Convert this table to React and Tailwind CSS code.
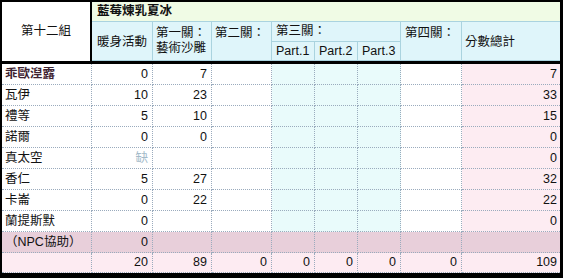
import React from "react";

const font = { fontFamily: "'Liberation Sans','Noto Sans CJK TC',sans-serif" };

const rows = [
  { name: "乖歐湼露", bold: true, v: ["0", "7", "", "", "", "", "", "7"] },
  { name: "瓦伊", v: ["10", "23", "", "", "", "", "", "33"] },
  { name: "禮等", v: ["5", "10", "", "", "", "", "", "15"] },
  { name: "諾爾", v: ["0", "0", "", "", "", "", "", "0"] },
  { name: "真太空", v: ["缺", "", "", "", "", "", "", "0"] },
  { name: "香仁", v: ["5", "27", "", "", "", "", "", "32"] },
  { name: "卡崙", v: ["0", "22", "", "", "", "", "", "22"] },
  { name: "蘭提斯默", v: ["0", "", "", "", "", "", "", "0"] },
  { name: "（NPC協助）", npc: true, v: ["0", "", "", "", "", "", "", ""] },
  { name: "", total: true, v: ["20", "89", "0", "0", "0", "0", "0", "109"] },
];

const colBg = [
  "bg-white",
  "bg-white",
  "bg-white",
  "bg-[#e9fbfb]",
  "bg-[#e9fbfb]",
  "bg-[#e9fbfb]",
  "bg-white",
  "bg-[#fdecf2]",
];

const hb = "border-[#aad3df]";

export default function App() {
  return (
    <div
      className="w-[563px] h-[278px] bg-black pl-[2px] pt-[2px] text-[12.5px] text-[#111]"
      style={font}
    >
      <div className="w-[558px] grid grid-cols-[90px_61px_59px_60px_43px_43px_43px_61px_98px] grid-rows-[20px_20px_19px_3px_repeat(9,21px)_20px]">
        {/* header */}
        <div className="row-span-3 bg-white border-r-2 border-black flex items-center justify-center pb-[1px]">
          第十二組
        </div>
        <div className={`col-span-8 bg-[#f0fbe5] border-b ${hb} flex items-center pl-[5px] font-bold`}>
          藍莓煉乳夏冰
        </div>
        <div className={`row-span-2 bg-[#dff5fa] border-r border-b ${hb} flex items-center pl-[5px] pt-[3px]`}>
          暖身活動
        </div>
        <div className={`row-span-2 bg-[#dff5fa] border-r border-b ${hb} flex items-center pl-[3px] leading-[15px]`}>
          <div>
            第一關：
            <br />
            藝術沙雕
          </div>
        </div>
        <div className={`row-span-2 bg-[#dff5fa] border-r border-b ${hb} flex items-center pl-[3px] leading-[15px]`}>
          <div>
            第二關：
            <br />
            &nbsp;
          </div>
        </div>
        <div className={`col-span-3 bg-[#dff5fa] border-r border-b ${hb} flex items-center pl-[4px]`}>
          第三關：
        </div>
        <div className={`row-span-2 bg-[#dff5fa] border-r border-b ${hb} flex items-center pl-[4px] leading-[15px]`}>
          <div>
            第四關：
            <br />
            &nbsp;
          </div>
        </div>
        <div className={`row-span-2 bg-[#dff5fa] border-b ${hb} flex items-center pl-[3px] pt-[3px]`}>
          分數總計
        </div>
        <div className={`bg-[#dff5fa] border-r border-b ${hb} flex items-center pl-[4px]`}>Part.1</div>
        <div className={`bg-[#dff5fa] border-r border-b ${hb} flex items-center pl-[4px]`}>Part.2</div>
        <div className={`bg-[#dff5fa] border-r border-b ${hb} flex items-center pl-[4px]`}>Part.3</div>
        <div className="col-span-9 bg-black" />

        {/* data */}
        {rows.map((r, i) => {
          const rowBg = r.npc ? "bg-[#e8cfda]" : r.total ? "bg-[#fdebf2]" : null;
          return (
            <React.Fragment key={i}>
              <div
                className={`${rowBg || "bg-white"} border-r border-b border-dotted border-[#9aabbd] flex items-center pl-[3px] ${
                  r.bold ? "font-bold text-[#3d2230]" : ""
                }`}
              >
                {r.name}
              </div>
              {r.v.map((val, j) => (
                <div
                  key={j}
                  className={`${rowBg || colBg[j]} ${
                    j === 7 ? "border-b pr-[3px]" : "border-r border-b pr-[4px]"
                  } border-dotted border-[#9aabbd] flex items-center justify-end ${
                    val === "缺" ? "text-[#a3bac9]" : ""
                  }`}
                >
                  {val}
                </div>
              ))}
            </React.Fragment>
          );
        })}
      </div>
    </div>
  );
}
